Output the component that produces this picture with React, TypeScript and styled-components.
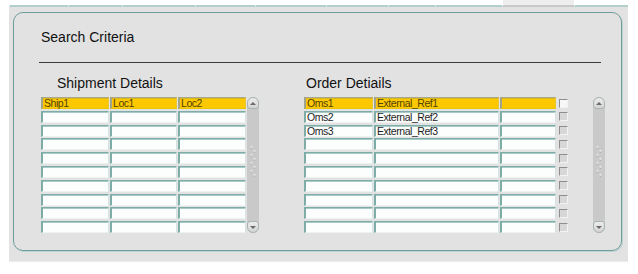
import React from "react";
import styled, { createGlobalStyle } from "styled-components";

const GlobalStyle = createGlobalStyle`
  body {
    margin: 0;
    background: #ffffff;
    font-family: "Liberation Sans", Arial, sans-serif;
  }
`;

const tabs = [59, 54, 73, 60, 71, 62, 47, 67, 72, 54];

const shipmentRows = [["Ship1", "Loc1", "Loc2"]];
const orderRows = [
  ["Oms1", "External_Ref1", ""],
  ["Oms2", "External_Ref2", ""],
  ["Oms3", "External_Ref3", ""],
];

const ROWS = 10;

const Grip = () => (
  <svg width="8" height="32" viewBox="0 0 8 32">
    {[0, 1, 2, 3, 4, 5, 6, 7].map((i) => (
      <React.Fragment key={i}>
        <circle cx={i % 2 ? 5.5 : 2.5} cy={2 + i * 4} r="0.9" fill="#f4f4f4" />
        <circle cx={i % 2 ? 5.5 : 2.5} cy={3 + i * 4} r="0.6" fill="#9a9a9a" />
      </React.Fragment>
    ))}
  </svg>
);

const ScrollBar = () => (
  <Scroll>
    <ScrollButton $up>
      <Arrow $up />
    </ScrollButton>
    <Track>
      <Grip />
    </Track>
    <ScrollButton>
      <Arrow />
    </ScrollButton>
  </Scroll>
);

const App: React.FC = () => {
  return (
    <Page>
      <GlobalStyle />
      <TabStrip>
        {tabs.map((w, i) => (
          <Tab key={i} style={{ width: w }} $active={i === 8} />
        ))}
      </TabStrip>
      <Canvas>
        <Panel>
          <Title>Search Criteria</Title>
          <Rule />
          <Sections>
            <Section>
              <Heading $indent={16}>Shipment Details</Heading>
              <TableWrap>
                <Grid $cols="68px 67px 68px">
                  {Array.from({ length: ROWS }).map((_, r) =>
                    [0, 1, 2].map((c) => (
                      <Cell key={`${r}-${c}`} $hl={r === 0}>
                        {shipmentRows[r]?.[c] ?? ""}
                      </Cell>
                    ))
                  )}
                </Grid>
                <ScrollGap $w={1} />
                <ScrollBar />
              </TableWrap>
            </Section>
            <Section>
              <Heading $indent={2}>Order Detiails</Heading>
              <TableWrap>
                <Grid $cols="69px 125px 56px 11px">
                  {Array.from({ length: ROWS }).map((_, r) => (
                    <React.Fragment key={r}>
                      {[0, 1, 2].map((c) => (
                        <Cell key={c} $hl={r === 0}>
                          {orderRows[r]?.[c] ?? ""}
                        </Cell>
                      ))}
                      <Check $focus={r === 0} />
                    </React.Fragment>
                  ))}
                </Grid>
                <ScrollGap $w={25} />
                <ScrollBar />
              </TableWrap>
            </Section>
          </Sections>
        </Panel>
      </Canvas>
    </Page>
  );
};

export default App;

// Styled components
const Page = styled.div`
  width: 638px;
  height: 274px;
  background: #fff;
`;

const TabStrip = styled.div`
  display: flex;
  margin-left: 9px;
  height: 7px;
`;

const Tab = styled.div<{ $active?: boolean }>`
  box-sizing: border-box;
  height: 7px;
  border-left: 1px solid #fff;
  border-bottom: 2px solid ${(p) => (p.$active ? "#c9c9cb" : "#b3cfcc")};
  background: ${(p) => (p.$active ? "#eeeeef" : "#fff")};
`;

const Canvas = styled.div`
  box-sizing: border-box;
  width: 619px;
  height: 255px;
  margin-left: 9px;
  padding: 5px 0 0 4px;
  background: #e2e2e2;
  border-bottom: 1px solid #ececec;
`;

const Panel = styled.div`
  box-sizing: border-box;
  width: 609px;
  height: 239px;
  border: 1px solid #6f9d9a;
  border-radius: 10px;
  box-shadow: 1px 1px 0 #bcd3d1;
  padding: 16px 0 0 27px;
  display: flex;
  flex-direction: column;
`;

const Title = styled.div`
  font-size: 14px;
  line-height: 16px;
  color: #111;
`;

const Rule = styled.div`
  width: 562px;
  height: 1px;
  margin: 17px 0 0 -2px;
  background: #3d3d3d;
`;

const Sections = styled.div`
  display: flex;
  gap: 45px;
  margin-top: 12px;
`;

const Section = styled.div`
  display: flex;
  flex-direction: column;
`;

const Heading = styled.div<{ $indent: number }>`
  font-size: 14px;
  line-height: 16px;
  color: #111;
  padding-left: ${(p) => p.$indent}px;
  margin-bottom: 6px;
`;

const TableWrap = styled.div`
  display: flex;
  align-items: stretch;
`;

const Grid = styled.div<{ $cols: string }>`
  display: grid;
  grid-template-columns: ${(p) => p.$cols};
  grid-auto-rows: 12px;
  column-gap: 1px;
  row-gap: 1.8px;
`;

const Cell = styled.div<{ $hl?: boolean }>`
  box-sizing: border-box;
  height: 12px;
  background: ${(p) => (p.$hl ? "#fdc800" : "#fcfdfd")};
  border-top: 1px solid ${(p) => (p.$hl ? "#a9a98a" : "#7eada8")};
  box-shadow: inset 0 1px 0 ${(p) => (p.$hl ? "#d8b820" : "#a9cbc7")};
  border-left: 2px solid ${(p) => (p.$hl ? "#9fa58c" : "#7eada8")};
  border-right: 1px solid ${(p) => (p.$hl ? "#e8c63a" : "#d5e4e2")};
  border-bottom: 1px solid ${(p) => (p.$hl ? "#e9c400" : "#eef3f2")};
  padding-left: 1px;
  font-size: 10.5px;
  line-height: 10px;
  letter-spacing: -0.45px;
  color: ${(p) => (p.$hl ? "#514300" : "#1e1e1e")};
  white-space: nowrap;
`;

const Check = styled.div<{ $focus?: boolean }>`
  box-sizing: border-box;
  justify-self: end;
  align-self: center;
  width: 9px;
  height: 9px;
  background: ${(p) => (p.$focus ? "#f7f7f7" : "#d7d7d7")};
  border-top: 1px solid #8e8e8e;
  border-left: 1px solid #8e8e8e;
  border-right: 1px solid #f2f2f2;
  border-bottom: 1px solid #f2f2f2;
`;

const ScrollGap = styled.div<{ $w: number }>`
  width: ${(p) => p.$w}px;
  flex: none;
`;

const Scroll = styled.div`
  width: 12px;
  display: flex;
  flex-direction: column;
  background: #c9c9c9;
  border-radius: 6px;
`;

const ScrollButton = styled.div<{ $up?: boolean }>`
  box-sizing: border-box;
  height: 12px;
  display: flex;
  align-items: center;
  justify-content: center;
  background: linear-gradient(#ececec, #d4d4d4);
  border: 1px solid #a9b4b3;
  border-radius: ${(p) => (p.$up ? "6px 6px 3px 3px" : "3px 3px 6px 6px")};
`;

const Arrow = styled.div<{ $up?: boolean }>`
  width: 0;
  height: 0;
  border-left: 3px solid transparent;
  border-right: 3px solid transparent;
  ${(p) =>
    p.$up ? "border-bottom: 3px solid #6b6b6b;" : "border-top: 3px solid #6b6b6b;"}
`;

const Track = styled.div`
  flex: 1;
  display: flex;
  justify-content: center;
  align-items: center;
  padding-bottom: 8px;
`;
